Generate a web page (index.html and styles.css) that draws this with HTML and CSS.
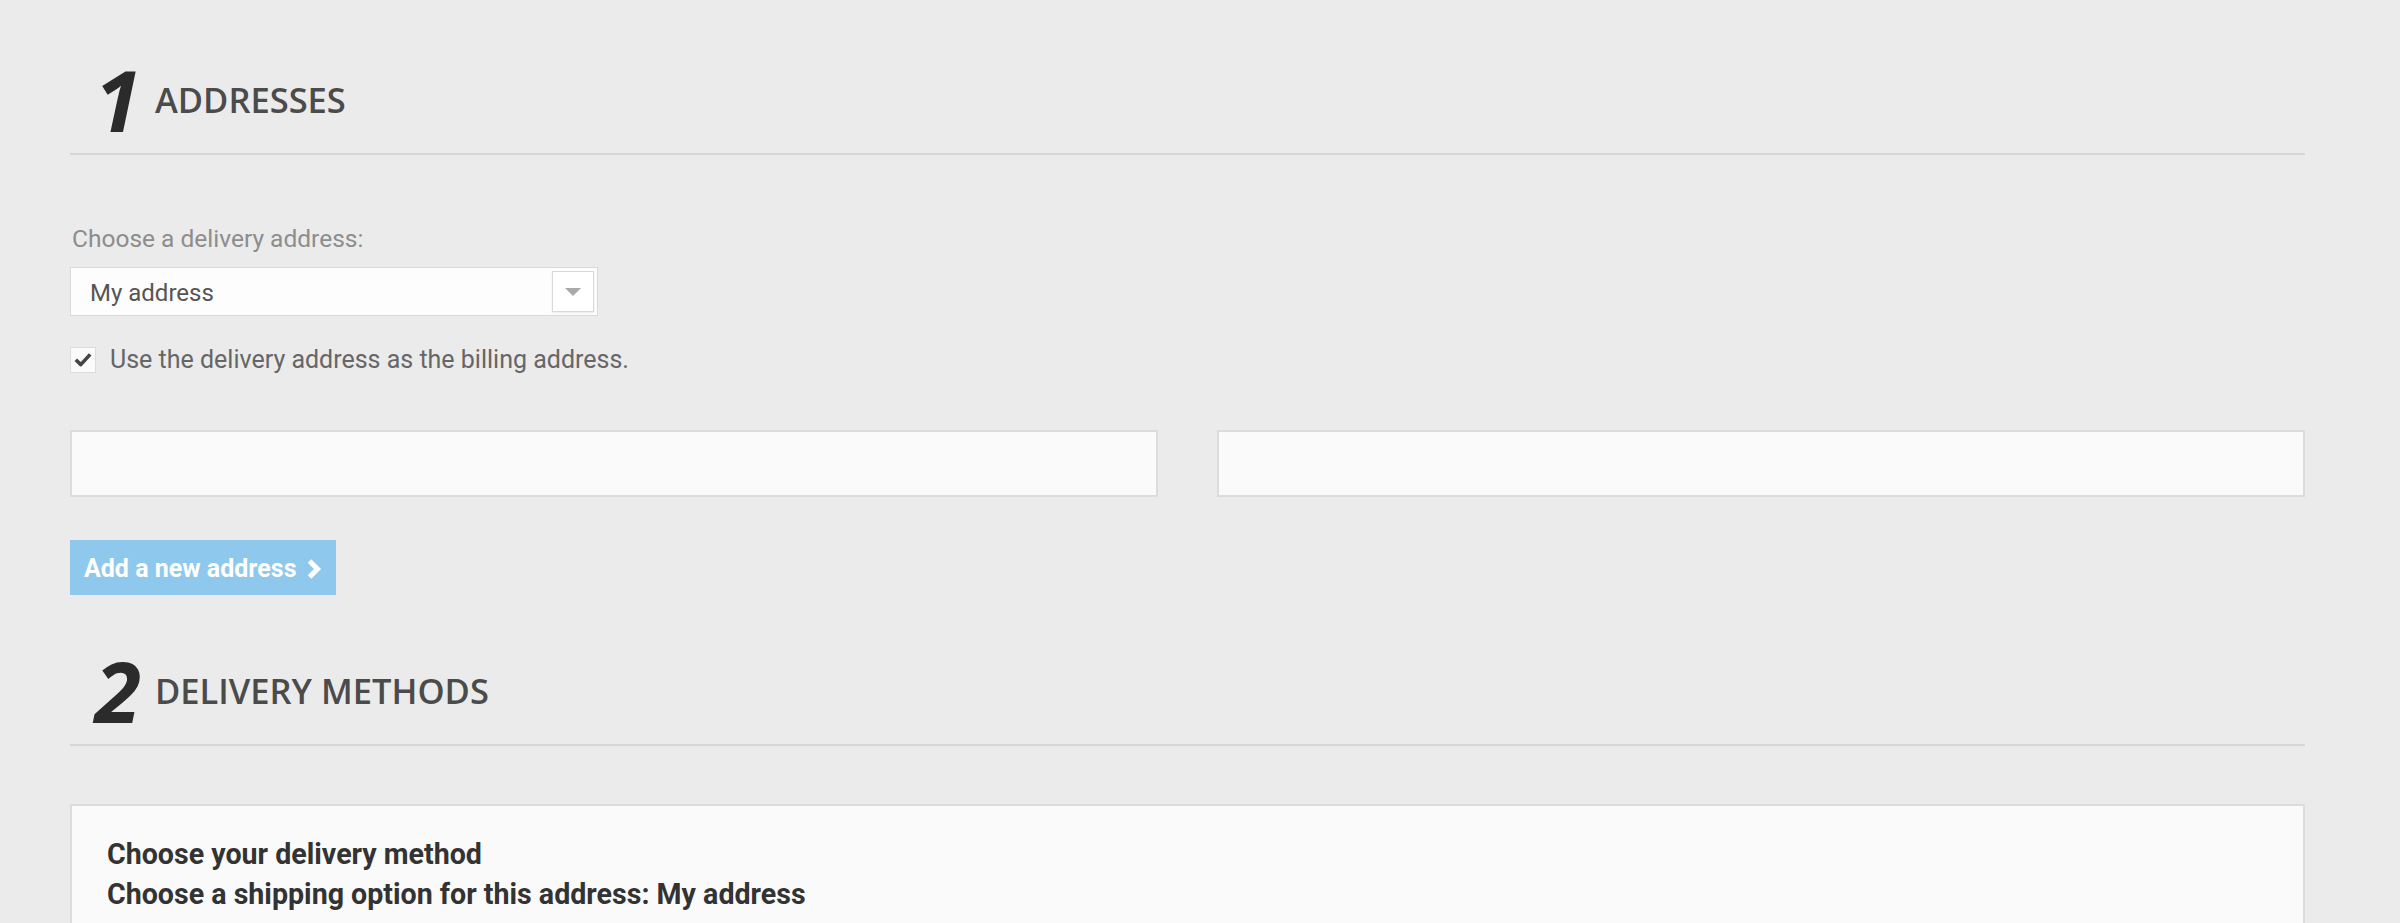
FILE: index.html
```html
<!DOCTYPE html>
<html lang="en">
<head>
    <meta charset="UTF-8">
    <meta name="viewport" content="width=device-width, initial-scale=1.0">
    <title>Checkout</title>
    <link rel="stylesheet" href="styles.css">
</head>
<body>
    <div class="checkout">
        <section class="step">
            <h2 class="step-title">
                <span class="step-num">1</span>
                <span class="step-name">ADDRESSES</span>
            </h2>

            <div class="step-body">
                <label class="field-label" for="deliveryAddress">Choose a delivery address:</label>
                <div class="select-box" id="deliveryAddress">
                    <span class="select-value">My address</span>
                    <span class="select-arrow"><span class="triangle"></span></span>
                </div>

                <div class="check-row">
                    <span class="check-box">
                        <svg width="18" height="15" viewBox="0 0 18 15">
                            <path d="M1.8 7.8 L6.8 12.6 L16.2 2.4" fill="none" stroke="#454545" stroke-width="3.6" stroke-linejoin="round"/>
                        </svg>
                    </span>
                    <span class="check-text">Use the delivery address as the billing address.</span>
                </div>

                <div class="address-grid">
                    <input type="text" class="address-input">
                    <input type="text" class="address-input">
                </div>

                <button class="btn-add">
                    Add a new address
                    <svg width="16" height="22" viewBox="0 0 16 22">
                        <path d="M3.5 3 L11.5 11 L3.5 19" fill="none" stroke="#fff" stroke-width="5"/>
                    </svg>
                </button>
            </div>
        </section>

        <section class="step">
            <h2 class="step-title">
                <span class="step-num">2</span>
                <span class="step-name">DELIVERY METHODS</span>
            </h2>

            <div class="delivery-box">
                <p class="delivery-line">Choose your delivery method</p>
                <p class="delivery-line">Choose a shipping option for this address: My address</p>
            </div>
        </section>
    </div>
</body>
</html>
```

FILE: styles.css
```css
body {
    font-family: Roboto, "Liberation Sans", sans-serif;
    background-color: #ebebeb;
    margin: 0;
    padding: 0;
}
.checkout {
    margin: 0 95px 0 70px;
    padding-top: 58px;
}
.step-title {
    display: flex;
    align-items: flex-end;
    margin: 0;
    padding-bottom: 11px;
    border-bottom: 2px solid #d6d6d6;
    font-family: "Open Sans", sans-serif;
}
.step-num {
    width: 71px;
    text-align: right;
    font-size: 84px;
    line-height: 1;
    font-weight: 700;
    font-style: italic;
    color: #2b2b2b;
}
.step-name {
    margin-left: 14px;
    padding-bottom: 25px;
    font-size: 34.5px;
    line-height: 1;
    font-weight: 600;
    color: #4b4b4b;
}
.step-body {
    padding-top: 69px;
    padding-bottom: 54px;
}
.field-label {
    display: block;
    font-size: 24.5px;
    line-height: 29px;
    color: #8d8d8d;
    margin-left: 2px;
}
.select-box {
    display: flex;
    align-items: center;
    justify-content: space-between;
    box-sizing: border-box;
    width: 528px;
    height: 49px;
    margin-top: 14px;
    padding: 0 3px 0 19px;
    background-color: #fdfdfd;
    border: 1px solid #dadada;
}
.select-value {
    font-size: 24px;
    color: #555;
    padding-top: 3px;
}
.select-arrow {
    display: flex;
    align-items: center;
    justify-content: center;
    box-sizing: border-box;
    width: 42px;
    height: 41px;
    background-color: #fff;
    border: 1px solid #d8d8d8;
    box-shadow: 0 1px 2px rgba(0, 0, 0, 0.08);
}
.triangle {
    width: 0;
    height: 0;
    border-left: 8px solid transparent;
    border-right: 8px solid transparent;
    border-top: 8px solid #a9a9a9;
}
.check-row {
    display: flex;
    align-items: center;
    margin-top: 29px;
}
.check-box {
    display: flex;
    align-items: center;
    justify-content: center;
    box-sizing: border-box;
    width: 26px;
    height: 26px;
    background-color: #fbfbfb;
    border: 1px solid #dcdcdc;
}
.check-text {
    margin-left: 14px;
    font-size: 25px;
    line-height: 29px;
    color: #666;
}
.address-grid {
    display: grid;
    grid-template-columns: 1fr 1fr;
    column-gap: 59px;
    margin-top: 56px;
}
.address-input {
    box-sizing: border-box;
    height: 67px;
    background-color: #fafafa;
    border: 2px solid #dcdcdc;
    font-size: 24px;
}
.btn-add {
    display: inline-flex;
    align-items: center;
    gap: 10px;
    height: 55px;
    margin-top: 43px;
    padding: 2px 14px 0 14px;
    background-color: #8ec8ec;
    color: #fff;
    border: none;
    font-family: Roboto, sans-serif;
    font-size: 25px;
    font-weight: 700;
    cursor: pointer;
}
.delivery-box {
    margin-top: 58px;
    padding: 28px 35px 60px;
    background-color: #fafafa;
    border: 2px solid #dcdcdc;
}
.delivery-line {
    margin: 0;
    font-size: 28.6px;
    line-height: 40px;
    font-weight: 700;
    color: #333;
}
```
